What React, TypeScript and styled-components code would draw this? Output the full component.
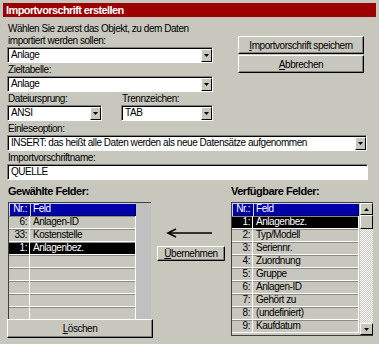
import styled, { createGlobalStyle } from "styled-components";

const GlobalStyle = createGlobalStyle`
  body {
    margin: 0;
    background: #c7c7bd;
  }
  * {
    box-sizing: border-box;
  }
`;

const font = `"Liberation Sans", Arial, sans-serif`;

type Row = { nr: string; name: string; selected?: boolean };

const chosen: Row[] = [
  { nr: "6:", name: "Anlagen-ID" },
  { nr: "33:", name: "Kostenstelle" },
  { nr: "1:", name: "Anlagenbez.", selected: true },
  { nr: "", name: "" },
  { nr: "", name: "" },
  { nr: "", name: "" },
  { nr: "", name: "" },
  { nr: "", name: "" },
];

const available: Row[] = [
  { nr: "1:", name: "Anlagenbez.", selected: true },
  { nr: "2:", name: "Typ/Modell" },
  { nr: "3:", name: "Seriennr." },
  { nr: "4:", name: "Zuordnung" },
  { nr: "5:", name: "Gruppe" },
  { nr: "6:", name: "Anlagen-ID" },
  { nr: "7:", name: "Gehört zu" },
  { nr: "8:", name: "(undefiniert)" },
  { nr: "9:", name: "Kaufdatum" },
];

function Combo({ value, width }: { value: string; width: number }) {
  return (
    <ComboBox $width={width}>
      <ComboText>{value}</ComboText>
      <DropButton>
        <svg width="5" height="3" viewBox="0 0 5 3">
          <path d="M0 0h5L2.5 3z" fill="#000" />
        </svg>
      </DropButton>
    </ComboBox>
  );
}

function FieldList({ rows, scroll }: { rows: Row[]; scroll?: boolean }) {
  return (
    <ListBox $scroll={scroll}>
      <ListGrid>
        <Cell $kind="head" $align="right">Nr.:</Cell>
        <Cell $kind="head">Feld</Cell>
        {rows.map((r, i) => (
          <RowFrag key={i} row={r} />
        ))}
      </ListGrid>
      {scroll ? (
        <ScrollBar>
          <ScrollBtn>
            <svg width="5" height="3" viewBox="0 0 5 3">
              <path d="M0 3h5L2.5 0z" fill="#000" />
            </svg>
          </ScrollBtn>
          <Thumb />
          <Track />
          <ScrollBtn>
            <svg width="5" height="3" viewBox="0 0 5 3">
              <path d="M0 0h5L2.5 3z" fill="#000" />
            </svg>
          </ScrollBtn>
        </ScrollBar>
      ) : (
        <EmptyGutter />
      )}
    </ListBox>
  );
}

function RowFrag({ row }: { row: Row }) {
  const kind = row.selected ? "sel" : "plain";
  return (
    <>
      <Cell $kind={kind} $align="right">{row.nr}</Cell>
      <Cell $kind={kind}>{row.name}</Cell>
    </>
  );
}

export default function App() {
  return (
    <>
      <GlobalStyle />
      <Window>
        <TitleBar>Importvorschrift erstellen</TitleBar>
        <Body>
          <TopSection>
            <LeftColumn>
              <Label>
                Wählen Sie zuerst das Objekt, zu dem Daten
                <br />
                importiert werden sollen:
              </Label>
              <Combo value="Anlage" width={206} />
              <Label>Zieltabelle:</Label>
              <Combo value="Anlage" width={206} />
              <PairRow>
                <Label>Dateiursprung:</Label>
                <Label>Trennzeichen:</Label>
                <Combo value="ANSI" width={95} />
                <Combo value="TAB" width={92} />
              </PairRow>
            </LeftColumn>
            <ButtonColumn>
              <Button $width={126}>
                <u>I</u>mportvorschrift speichern
              </Button>
              <Button $width={126}>
                <u>A</u>bbrechen
              </Button>
            </ButtonColumn>
          </TopSection>
          <Label $top={2}>Einleseoption:</Label>
          <Combo
            value="INSERT: das heißt alle Daten werden als neue Datensätze aufgenommen"
            width={360}
          />
          <Label>Importvorschriftname:</Label>
          <TextInput>QUELLE</TextInput>
          <ListsSection>
            <ListColumn>
              <SectionTitle>Gewählte Felder:</SectionTitle>
              <FieldList rows={chosen} />
              <Button $width={146} $height={19}>
                <u>L</u>öschen
              </Button>
            </ListColumn>
            <MiddleColumn>
              <svg width="46" height="10" viewBox="0 0 46 10">
                <path d="M2 5h44" stroke="#000" strokeWidth="1.6" />
                <path d="M10 1L2 5l8 4" stroke="#000" strokeWidth="1.6" fill="none" />
              </svg>
              <Button $width={68} $height={15}>
                <u>Ü</u>bernehmen
              </Button>
            </MiddleColumn>
            <ListColumn $shift={1}>
              <SectionTitle>Verfügbare Felder:</SectionTitle>
              <FieldList rows={available} scroll />
            </ListColumn>
          </ListsSection>
        </Body>
      </Window>
    </>
  );
}

const Window = styled.div`
  width: 379px;
  height: 344px;
  padding: 3px 3px 0;
  background: #c7c7bd;
  font-family: ${font};
  font-size: 10px;
  letter-spacing: -0.45px;
  color: #000;
  overflow: hidden;
  display: flex;
  flex-direction: column;
`;

const TitleBar = styled.div`
  height: 14px;
  background: #9c0000;
  color: #fff;
  font-weight: bold;
  font-size: 11px;
  letter-spacing: -0.6px;
  line-height: 14px;
  padding-left: 3px;
  white-space: nowrap;
`;

const Body = styled.div`
  padding: 5px 0 0 4px;
  display: flex;
  flex-direction: column;
`;

const TopSection = styled.div`
  display: flex;
  gap: 25px;
`;

const LeftColumn = styled.div`
  display: flex;
  flex-direction: column;
  width: 206px;
`;

const PairRow = styled.div`
  display: grid;
  grid-template-columns: 114px 92px;
`;

const ButtonColumn = styled.div`
  padding-top: 14px;
  display: flex;
  flex-direction: column;
  gap: 1px;
`;

const Label = styled.div<{ $top?: number }>`
  line-height: 12px;
  margin-top: ${(p) => p.$top ?? 1}px;
  padding-left: 1px;
  white-space: nowrap;
`;

const ComboBox = styled.div<{ $width: number }>`
  width: ${(p) => p.$width}px;
  height: 16px;
  background: #fff;
  display: flex;
  align-items: stretch;
  border-top: 1px solid #808080;
  border-left: 1px solid #808080;
  border-right: 1px solid #fff;
  border-bottom: 1px solid #fff;
  box-shadow: inset 1px 1px 0 #000;
`;

const ComboText = styled.div`
  flex: 1;
  padding-left: 3px;
  line-height: 14px;
  white-space: nowrap;
  overflow: hidden;
`;

const DropButton = styled.div`
  width: 11px;
  margin: 1px 0 0;
  background: #c7c7bd;
  display: flex;
  align-items: center;
  justify-content: center;
  border-top: 1px solid #fff;
  border-left: 1px solid #fff;
  border-right: 1px solid #000;
  border-bottom: 1px solid #000;
`;

const TextInput = styled.div`
  width: 361px;
  height: 16px;
  background: #fff;
  padding-left: 3px;
  line-height: 14px;
  border-top: 1px solid #808080;
  border-left: 1px solid #808080;
  border-right: 1px solid #fff;
  border-bottom: 1px solid #fff;
  box-shadow: inset 1px 1px 0 #000;
`;

const Button = styled.div<{ $width: number; $height?: number }>`
  width: ${(p) => p.$width}px;
  height: ${(p) => p.$height ?? 18}px;
  display: flex;
  align-items: center;
  justify-content: center;
  white-space: nowrap;
  background: #c7c7bd;
  border-top: 1px solid #fff;
  border-left: 1px solid #fff;
  border-right: 1px solid #000;
  border-bottom: 1px solid #000;
  box-shadow: inset -1px -1px 0 #808080;
  u {
    text-decoration: underline;
  }
`;

const ListsSection = styled.div`
  margin-top: 4px;
  display: grid;
  grid-template-columns: 146px 76px 1fr;
`;

const ListColumn = styled.div<{ $shift?: number }>`
  display: flex;
  flex-direction: column;
  padding-left: ${(p) => p.$shift ?? 0}px;
`;

const SectionTitle = styled.div`
  font-weight: bold;
  font-size: 11px;
  letter-spacing: -0.5px;
  line-height: 14px;
  height: 14px;
  margin-left: 1px;
  margin-bottom: 4px;
`;

const MiddleColumn = styled.div`
  display: flex;
  flex-direction: column;
  align-items: center;
  padding-top: 44px;
  gap: 8px;
  svg {
    margin-left: -4px;
  }
`;

const ListBox = styled.div<{ $scroll?: boolean }>`
  margin-left: 1px;
  width: ${(p) => (p.$scroll ? 142 : 143)}px;
  height: ${(p) => (p.$scroll ? 134 : 117)}px;
  display: flex;
  border-top: 1px solid #404040;
  border-left: 1px solid #404040;
  border-bottom: ${(p) => (p.$scroll ? "1px solid #404040" : "none")};
  overflow: hidden;
`;

const ListGrid = styled.div`
  width: 127px;
  display: grid;
  grid-template-columns: 21px 106px;
  grid-auto-rows: 13px;
  align-content: start;
`;

const Cell = styled.div<{ $kind: "head" | "sel" | "plain"; $align?: string }>`
  line-height: 12px;
  padding: 0 3px;
  white-space: nowrap;
  overflow: hidden;
  text-align: ${(p) => p.$align ?? "left"};
  color: ${(p) => (p.$kind === "plain" ? "#000" : "#fff")};
  background: ${(p) =>
    p.$kind === "head" ? "#0000a8" : p.$kind === "sel" ? "#000" : "#c7c7bd"};
  box-shadow: ${(p) =>
    p.$kind === "head"
      ? "inset 1px 1px 0 #d0d0ff, inset -1px -1px 0 #000060"
      : "inset 0 -1px 0 #fff, inset -1px 0 0 #fff, inset 0 1px 0 #8a8a82"};
`;

const EmptyGutter = styled.div`
  flex: 1;
  background: #c0c0c0;
`;

const ScrollBar = styled.div`
  width: 14px;
  margin-left: 1px;
  display: flex;
  flex-direction: column;
`;

const ScrollBtn = styled.div`
  height: 12px;
  display: flex;
  align-items: center;
  justify-content: center;
  background: #c7c7bd;
  border-top: 1px solid #fff;
  border-left: 1px solid #fff;
  border-right: 1px solid #000;
  border-bottom: 1px solid #000;
`;

const Thumb = styled.div`
  height: 14px;
  background: #c7c7bd;
  border-top: 1px solid #fff;
  border-left: 1px solid #fff;
  border-right: 1px solid #000;
  border-bottom: 1px solid #000;
`;

const Track = styled.div`
  flex: 1;
  background: repeating-conic-gradient(#fff 0 25%, #c7c7bd 0 50%) 0 0 / 2px 2px;
`;
